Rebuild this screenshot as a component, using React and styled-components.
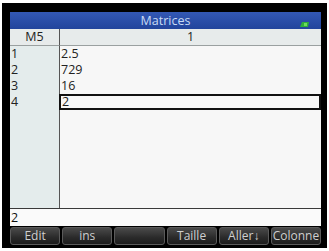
import React from "react";
import styled, { createGlobalStyle } from "styled-components";

const Global = createGlobalStyle`
  html, body { margin: 0; padding: 0; background: #fff; }
  body { font-family: "Open Sans", "Noto Sans", sans-serif; }
`;

const Bezel = styled.div`
  margin: 3px 2px 0 2px;
  width: 325px;
  height: 245px;
  box-sizing: border-box;
  background: #000;
  padding: 9px 6px 3px 8px;
  display: flex;
`;

const Screen = styled.div`
  flex: 1;
  display: flex;
  flex-direction: column;
  background: #f7f7f7;
`;

const TitleBar = styled.div`
  height: 17px;
  position: relative;
  background: linear-gradient(#3358b4, #22449c);
  color: #c9dbf5;
  font-size: 12.5px;
  line-height: 17px;
  text-align: center;
`;

const Battery = styled.svg`
  position: absolute;
  right: 12px;
  top: 10px;
`;

const Grid = styled.div`
  display: grid;
  grid-template-columns: 49px 1fr;
  grid-template-rows: 17px repeat(4, 16px) 1fr;
  flex: 1;
  border-bottom: 1px solid #3a3a3a;
`;

const HeadCell = styled.div`
  background: #e7ebeb;
  border-bottom: 1px solid #9aa0a0;
  border-left: ${(p) => (p.$divider ? "1px solid #555" : "none")};
  color: #222;
  font-size: 12.5px;
  line-height: 16px;
  text-align: center;
`;

const IndexCell = styled.div`
  background: #e4ecec;
  color: #222;
  font-size: 12.5px;
  line-height: 16px;
  padding-left: 1px;
`;

const ValueCell = styled.div`
  border-left: 1px solid #555;
  color: #222;
  font-size: 12.5px;
  line-height: 16px;
  padding-left: 1px;
  box-sizing: border-box;
  ${(p) =>
    p.$selected &&
    `
    border: 2px solid #111;
    line-height: 12px;
    padding-left: 1px;
    margin-right: 0;
  `}
`;

const Filler = styled.div`
  background: ${(p) => (p.$left ? "#e4ecec" : "#f7f7f7")};
  border-left: ${(p) => (p.$left ? "none" : "1px solid #555")};
`;

const InputLine = styled.div`
  height: 17px;
  background: #fafafa;
  color: #111;
  font-size: 12.5px;
  line-height: 17px;
  padding-left: 1px;
`;

const SoftBar = styled.div`
  background: #000;
  padding: 1px 0 0 0;
  display: grid;
  grid-template-columns: repeat(6, 1fr);
  column-gap: 2px;
  height: 18px;
`;

const SoftKey = styled.div`
  border-radius: 3px;
  background: linear-gradient(#4a4a4a, #2a2a2a 60%, #1c1c1c);
  border: 1px solid #5a5a5a;
  color: #cfcfcf;
  font-size: 12px;
  line-height: 15px;
  text-align: center;
  white-space: nowrap;
  overflow: hidden;
`;

const rows = [
  ["1", "2.5"],
  ["2", "729"],
  ["3", "16"],
  ["4", "2"],
];

export default function App() {
  return (
    <>
      <Global />
      <Bezel>
        <Screen>
          <TitleBar>
            Matrices
            <Battery width="9" height="5" viewBox="0 0 9 5">
              <polygon points="2,0 9,0 8,5 0,5" fill="#2fae3a" />
              <rect x="4" y="1" width="3" height="3" fill="#6ddc5a" />
            </Battery>
          </TitleBar>
          <Grid>
            <HeadCell>M5</HeadCell>
            <HeadCell $divider>1</HeadCell>
            {rows.map(([i, v], k) => (
              <React.Fragment key={i}>
                <IndexCell>{i}</IndexCell>
                <ValueCell $selected={k === 3}>{v}</ValueCell>
              </React.Fragment>
            ))}
            <Filler $left />
            <Filler />
          </Grid>
          <InputLine>2</InputLine>
          <SoftBar>
            {["Edit", "ins", "", "Taille", "Aller\u2193", "Colonne"].map((t, i) => (
              <SoftKey key={i}>{t}</SoftKey>
            ))}
          </SoftBar>
        </Screen>
      </Bezel>
    </>
  );
}
